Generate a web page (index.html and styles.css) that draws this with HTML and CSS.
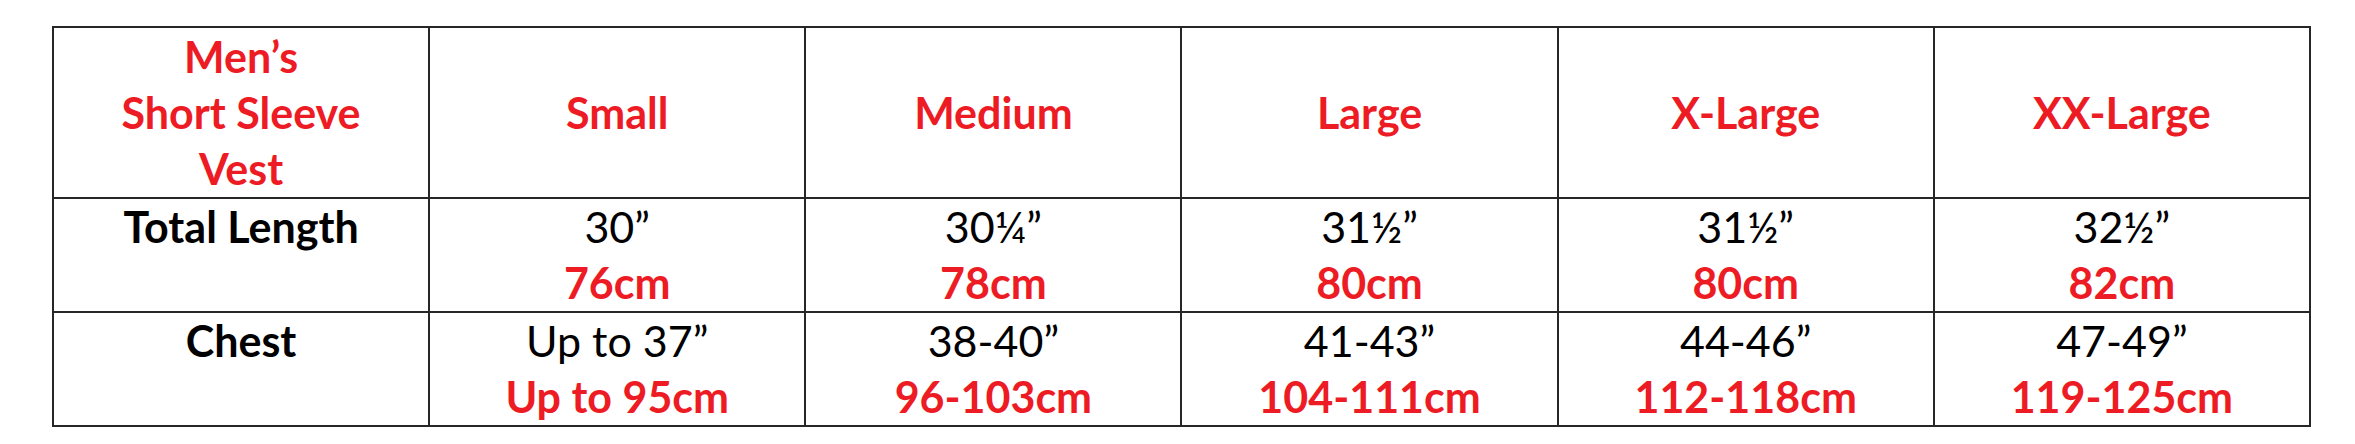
FILE: index.html
```html
<!DOCTYPE html>
<html>
<head>
<meta charset="utf-8">
<link rel="stylesheet" href="styles.css">
</head>
<body>
<table class="sizes">
  <tr class="head">
    <th>Men’s<br>Short Sleeve<br>Vest</th>
    <th>Small</th>
    <th>Medium</th>
    <th>Large</th>
    <th>X-Large</th>
    <th>XX-Large</th>
  </tr>
  <tr class="row">
    <td class="label">Total Length</td>
    <td>30”<br><span class="cm">76cm</span></td>
    <td>30¼”<br><span class="cm">78cm</span></td>
    <td>31½”<br><span class="cm">80cm</span></td>
    <td>31½”<br><span class="cm">80cm</span></td>
    <td>32½”<br><span class="cm">82cm</span></td>
  </tr>
  <tr class="row">
    <td class="label">Chest</td>
    <td>Up to 37”<br><span class="cm">Up to 95cm</span></td>
    <td>38-40”<br><span class="cm">96-103cm</span></td>
    <td>41-43”<br><span class="cm">104-111cm</span></td>
    <td>44-46”<br><span class="cm">112-118cm</span></td>
    <td>47-49”<br><span class="cm">119-125cm</span></td>
  </tr>
</table>
</body>
</html>
```
FILE: styles.css
```css
html, body {
  margin: 0;
  padding: 0;
  background: #ffffff;
}
body {
  padding: 26px 0 0 52px;
  font-family: Lato, "Open Sans", sans-serif;
}
.sizes {
  border-collapse: collapse;
  table-layout: fixed;
  width: 2259px;
}
.sizes th, .sizes td {
  border: 2px solid #262626;
  text-align: center;
  padding: 0;
  font-size: 43px;
  line-height: 56px;
  color: #000;
}
.head th {
  height: 169px;
  color: #ed1c24;
  font-weight: 700;
  vertical-align: middle;
}
.row td {
  height: 112px;
  vertical-align: top;
  font-weight: 400;
}
.row td.label {
  font-weight: 700;
}
.cm {
  color: #ed1c24;
  font-weight: 700;
}
```
